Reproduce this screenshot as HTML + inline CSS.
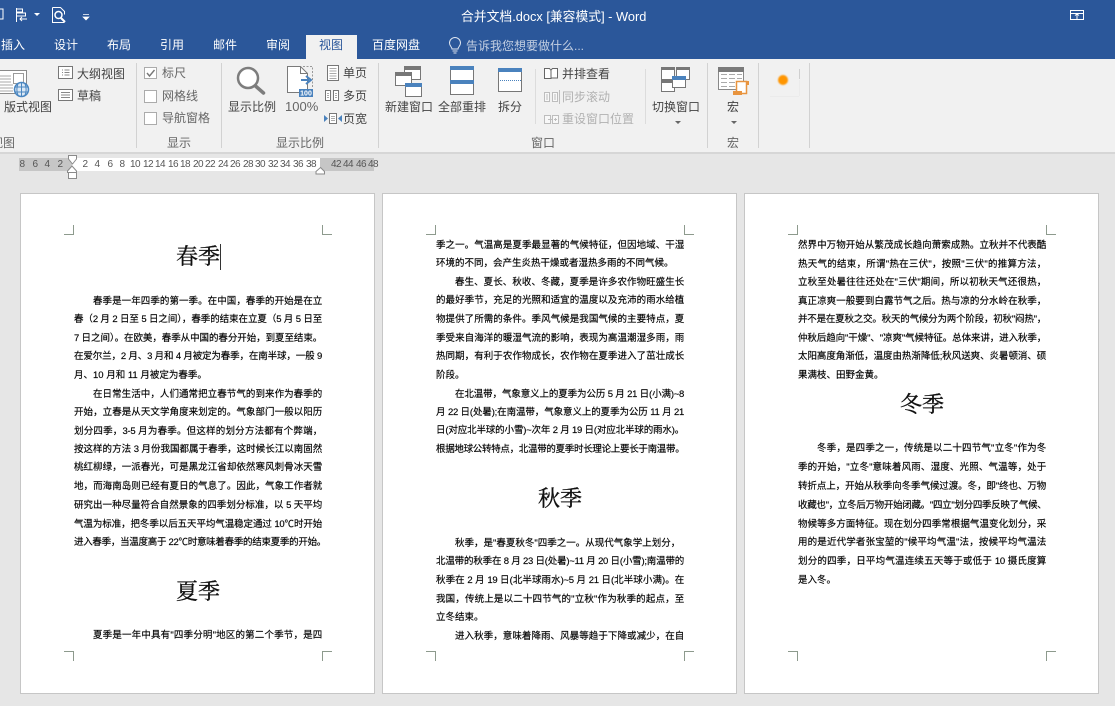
<!DOCTYPE html>
<html lang="zh"><head><meta charset="utf-8"><title>合并文档</title>
<style>
html,body{margin:0;padding:0}
body{width:1115px;height:706px;position:relative;overflow:hidden;background:#e6e6e6;font-family:"Liberation Sans","Noto Sans CJK SC",sans-serif}
#bar{position:absolute;left:0;top:0;width:1115px;height:59px;background:#2b579a}
#rib{position:absolute;left:0;top:59px;width:1115px;height:93px;background:#f1f1f1;border-bottom:2px solid #d6d6d6}
#atab{position:absolute;left:306px;top:35px;width:51px;height:24px;background:#f1f1f1}
svg{position:absolute;left:0;top:0}
.t{position:absolute;font-size:12px;line-height:16px;height:16px;color:#444;white-space:nowrap}
.w{color:#fff}.g{color:#b1b1b1}.h{color:#666}
.r{position:absolute;top:158px;height:13px;background:#c6c6c6}
.n{position:absolute;top:159px;font-size:10px;line-height:12px;color:#555;width:14px;text-align:center;letter-spacing:-.5px}
.p{position:absolute;top:193px;width:353px;height:499px;background:#fff;border:1px solid #c6c6c6}
.p i{position:absolute;display:block;width:9px;height:9px;border:0 solid #8d9a8d}
.a{left:43px;top:31px;border-right-width:1px!important;border-bottom-width:1px!important}
.b{left:301px;top:31px;border-left-width:1px!important;border-bottom-width:1px!important}
.c{left:43px;top:457px;border-right-width:1px!important;border-top-width:1px!important}
.d{left:301px;top:457px;border-left-width:1px!important;border-top-width:1px!important}
.l{position:absolute;left:53px;width:248px;height:14px;line-height:14px;font-size:9.5px;color:#000;white-space:nowrap;text-align:justify;text-align-last:justify;letter-spacing:-.3px;-webkit-text-stroke:.15px #000;font-family:"Liberation Sans","Noto Sans CJK SC",sans-serif}
.e{text-align-last:left;text-align:left;letter-spacing:0}
.x{padding-left:19px;width:229px}
.h1{position:absolute;left:1px;width:352px;text-align:center;font-size:22px;line-height:28px;color:#111;-webkit-text-stroke:.35px #111;font-family:"Liberation Serif","Noto Serif CJK SC",serif}
</style></head><body>
<div id="bar"></div><div id="rib"></div><div id="atab"></div>

<svg width="1115" height="152" viewBox="0 0 1115 152" fill="none">
<!-- QAT -->
<path d="M0 9h3v10H0" stroke="#fff"/>
<path d="M16.500 8v14M16.500 9h6v3h-6M16.500 13h9v3h-9M27 19h-7m2-2l-2 2 2 2" stroke="#fff"/>
<path d="M34 13h6l-3 3z" fill="#fff"/>
<path d="M52.500 7.500h8l4 4v3M52.500 7.500v15h12" stroke="#fff"/>
<circle cx="58.500" cy="15" r="3.500" stroke="#fff" stroke-width="1.500"/><path d="M61 18l4 4" stroke="#fff" stroke-width="2"/>
<path d="M83 14.500h6M83 17h6l-3 3z" stroke="#fff" fill="#fff" stroke-width=".7"/>
<path d="M1070.500 10.500h13v9h-13zM1070.500 13.500h13M1077 19v-5m-2 1.500l2-1.500 2 1.500" stroke="#fff"/>
<!-- bulb -->
<path d="M452 49c0-2-2.500-3-2.500-6a5.500 5.500 0 0 1 11 0c0 3-2.500 4-2.500 6zM452.500 51h5M453.500 53h3" stroke="#dfe6f0"/>
<!-- separators -->
<path d="M136.500 63v85M221.500 63v85M378.500 63v85M707.500 63v85M758.500 63v85M809.500 63v85" stroke="#d2d2d2"/>
<path d="M535.500 69v55M645.500 69v55" stroke="#dcdcdc"/>
<!-- layout view -->
<path d="M-1 70.500h27.500v23H-1z" fill="#fff" stroke="#8a8a8a"/>
<path d="M13.500 73.500h10v10h-10z" fill="#fff" stroke="#9a9a9a"/>
<path d="M0 76h11M0 79h11M0 82h11M0 85h13M0 88h13M0 91h13" stroke="#aaa"/>
<circle cx="21.500" cy="89.500" r="7" fill="#dbe8f5" stroke="#4a86c0" stroke-width="1.500"/>
<path d="M15 87h13M15 92h13M21.500 83v13M18 84c-1.500 3-1.500 8 0 11M25 84c1.500 3 1.500 8 0 11" stroke="#4a86c0"/>
<!-- outline / draft -->
<path d="M58.500 66.500h14v12h-14z" fill="#fff" stroke="#777"/>
<path d="M62 70h1M62 72.500h1M62 75h1M64.500 70h5M64.500 72.500h5M64.500 75h5" stroke="#888"/>
<path d="M58.500 89.500h14v11h-14z" fill="#fff" stroke="#777"/>
<path d="M61 92.500h9M61 95h9M61 97.500h9" stroke="#888"/>
<!-- checkboxes -->
<path d="M144.500 67.500h12v11h-12zM144.500 90.500h12v12h-12zM144.500 112.500h12v12h-12z" fill="#fff" stroke="#ababab"/>
<path d="M147 73l2.500 3 5-6" stroke="#777" stroke-width="1.400"/>
<!-- magnifier -->
<circle cx="248" cy="78" r="10" fill="#fff" stroke="#7d7d7d" stroke-width="2.500"/>
<path d="M255.500 86l8 7" stroke="#7d7d7d" stroke-width="3.500" stroke-linecap="round"/>
<!-- 100% -->
<path d="M287.500 66.500h13l7 7v19h-20z" fill="#fff" stroke="#7a7a7a"/>
<path d="M300.500 66.500v7h7" stroke="#7a7a7a"/>
<path d="M303 66.500h9.500v22" stroke="#999" stroke-dasharray="2 1.500"/>
<path d="M301 80h8m-3-4l5 4-5 4" stroke="#4a82bd" stroke-width="2"/>
<rect x="299" y="89" width="14" height="8" fill="#4a82bd"/>
<!-- single/multi/width -->
<path d="M327.500 65.500h11v15h-11z" fill="#fff" stroke="#777"/>
<path d="M329.500 68.500h7M329.500 71h7M329.500 73.500h7M329.500 76h7M329.500 78.500h7" stroke="#aaa"/>
<path d="M325.500 90.500h5v10h-5zM333.500 90.500h5v10h-5z" fill="#fff" stroke="#777"/>
<path d="M327 93.500h2M327 95.500h2M327 97.500h2M335 93.500h2M335 95.500h2M335 97.500h2" stroke="#aaa"/>
<path d="M329.500 113.500h7v10h-7z" fill="#fff" stroke="#777"/>
<path d="M331 116.500h4M331 118.500h4M331 120.500h4" stroke="#aaa"/>
<path d="M328 118.500l-4-3.500v7zM338 118.500l4-3.500v7z" fill="#4a82bd"/>
<!-- new window -->
<path d="M404.500 66.500h16v13h-16z" fill="#fff" stroke="#777"/><rect x="404" y="66" width="17" height="4" fill="#777"/>
<path d="M395.500 72.500h16v13h-16z" fill="#fff" stroke="#777"/><rect x="395" y="72" width="17" height="4" fill="#777"/>
<path d="M405.500 83.500h16v13h-16z" fill="#fff" stroke="#777"/><rect x="405" y="83" width="17" height="4" fill="#4a82bd"/>
<!-- arrange all -->
<path d="M450.500 66.500h23v28h-23z" fill="#fff" stroke="#777"/>
<rect x="450" y="66" width="24" height="4" fill="#4a82bd"/><rect x="450" y="80" width="24" height="4" fill="#4a82bd"/>
<!-- split -->
<path d="M498.500 68.500h23v23h-23z" fill="#fff" stroke="#777"/>
<rect x="498" y="68" width="24" height="4" fill="#4a82bd"/>
<path d="M500 80.500h21" stroke="#4a82bd" stroke-dasharray="1 1"/>
<!-- side by side -->
<path d="M544.500 68.500h5l1.500 2v8h-6.500zM552.500 68.500h5v9.500h-6.500v-8z" fill="#fff" stroke="#666"/>
<!-- sync scroll -->
<path d="M544.500 92.500h5v9h-5zM552.500 92.500h5v9h-5z" fill="#f8f8f8" stroke="#bdbdbd"/>
<path d="M546 95h2M546 97h2M546 99h2M554 95h2M554 97h2M554 99h2M559.500 90v14" stroke="#bdbdbd"/>
<!-- reset -->
<path d="M544.500 115.500h6v8h-6zM552.500 115.500h6v8h-6z" fill="#f8f8f8" stroke="#bdbdbd"/>
<path d="M548 119.500h4M554 119.500h3M555.500 118v3" stroke="#bdbdbd"/>
<!-- switch windows -->
<path d="M661.500 67.500h13v12h-13zM676.500 67.500h13v12h-13zM661.500 80.500h13v11h-13z" fill="#fff" stroke="#777"/>
<rect x="661" y="67" width="14" height="3" fill="#777"/><rect x="676" y="67" width="14" height="3" fill="#777"/><rect x="661" y="80" width="14" height="3" fill="#777"/>
<path d="M672.500 76.500h13v11h-13z" fill="#fff" stroke="#777"/><rect x="672" y="76" width="14" height="4" fill="#4a82bd"/>
<path d="M675 121h6l-3 3zM731 121h6l-3 3z" fill="#666"/>
<!-- macro -->
<path d="M718.500 67.500h25v22h-25z" fill="#fff" stroke="#888"/><rect x="718" y="67" width="26" height="5" fill="#7a7a7a"/>
<path d="M721 74.500h6M729 74.500h6M737 74.500h5M721 78.500h6M729 78.500h6M737 78.500h5M721 82.500h6M729 82.500h6M721 86.500h6M729 86.500h6" stroke="#aaa"/>
<path d="M736.500 81.500h10v12h-10z" fill="#fff" stroke="#e8943f" stroke-width="1.500"/>
<path d="M733 91h9v4h-9zM746 81h3v4h-3z" fill="#e8943f"/>
<!-- orange addin -->
<defs><filter id="bl" x="-40%" y="-40%" width="180%" height="180%"><feGaussianBlur stdDeviation=".7"/></filter></defs>
<circle cx="783" cy="80" r="5" fill="#ff9500" filter="url(#bl)"/>
<path d="M799.500 69v10" stroke="#cfcfcf"/><path d="M770 96.500h29M799.500 80v16" stroke="#ebebeb"/>
</svg>

<div class="t w" style="left:461px;top:9px;font-size:12.800px">合并文档.docx [兼容模式] - Word</div>
<div class="t w" style="left:1px;top:37px">插入</div>
<div class="t w" style="left:54px;top:37px">设计</div>
<div class="t w" style="left:107px;top:37px">布局</div>
<div class="t w" style="left:160px;top:37px">引用</div>
<div class="t w" style="left:213px;top:37px">邮件</div>
<div class="t w" style="left:266px;top:37px">审阅</div>
<div class="t" style="left:319px;top:37px;color:#2b579a">视图</div>
<div class="t w" style="left:372px;top:37px">百度网盘</div>
<div class="t" style="left:466px;top:38px;color:#c3cfe2">告诉我您想要做什么...</div>
<svg width="1115" height="100" style="top:0" viewBox="0 0 1115 100"><text x="306" y="95.500" font-size="7" font-weight="bold" fill="#fff" text-anchor="middle" font-family="Liberation Sans">100</text></svg>

<div class="t" style="left:4px;top:99px">版式视图</div>
<div class="t" style="left:77px;top:66px">大纲视图</div>
<div class="t" style="left:77px;top:88px">草稿</div>
<div class="t h" style="left:162px;top:65px">标尺</div>
<div class="t h" style="left:162px;top:88px">网格线</div>
<div class="t h" style="left:162px;top:110px">导航窗格</div>
<div class="t" style="left:228px;top:99px">显示比例</div>
<div class="t" style="left:285px;top:99px;font-size:13px;color:#666">100%</div>
<div class="t" style="left:343px;top:65px">单页</div>
<div class="t" style="left:343px;top:88px">多页</div>
<div class="t" style="left:343px;top:111px">页宽</div>
<div class="t" style="left:385px;top:99px">新建窗口</div>
<div class="t" style="left:438px;top:99px">全部重排</div>
<div class="t" style="left:498px;top:99px">拆分</div>
<div class="t" style="left:562px;top:66px">并排查看</div>
<div class="t g" style="left:562px;top:89px">同步滚动</div>
<div class="t g" style="left:562px;top:111px">重设窗口位置</div>
<div class="t" style="left:652px;top:99px">切换窗口</div>
<div class="t" style="left:727px;top:99px">宏</div>
<div class="t h" style="left:-9px;top:135px">视图</div>
<div class="t h" style="left:167px;top:135px">显示</div>
<div class="t h" style="left:276px;top:135px">显示比例</div>
<div class="t h" style="left:531px;top:135px">窗口</div>
<div class="t h" style="left:727px;top:135px">宏</div>

<!-- ruler -->
<div class="r" style="left:19px;width:53px"></div>
<div class="r" style="left:72px;width:248px;background:#fff"></div>
<div class="r" style="left:320px;width:54px"></div>
<div class="n" style="left:15px">8</div><div class="n" style="left:28px">6</div><div class="n" style="left:40px">4</div><div class="n" style="left:53px">2</div>
<div class="n" style="left:78px">2</div><div class="n" style="left:90px">4</div><div class="n" style="left:103px">6</div><div class="n" style="left:115px">8</div>
<div class="n" style="left:128px">10</div><div class="n" style="left:141px">12</div><div class="n" style="left:153px">14</div><div class="n" style="left:166px">16</div>
<div class="n" style="left:178px">18</div><div class="n" style="left:191px">20</div><div class="n" style="left:203px">22</div><div class="n" style="left:216px">24</div>
<div class="n" style="left:228px">26</div><div class="n" style="left:241px">28</div><div class="n" style="left:253px">30</div><div class="n" style="left:266px">32</div>
<div class="n" style="left:278px">34</div><div class="n" style="left:291px">36</div><div class="n" style="left:304px">38</div>
<div class="n" style="left:329px">42</div><div class="n" style="left:341px">44</div><div class="n" style="left:354px">46</div><div class="n" style="left:366px">48</div>
<svg width="1115" height="200" viewBox="0 0 1115 200" fill="none" style="top:0">
<path d="M68.500 155.500h8v3.500l-4 5-4-5zM72 166l4.500 5v1.500h-9V171zM68.500 172.500h8v6h-8z" fill="#fff" stroke="#8a8a8a"/>
<path d="M320.500 167.500l4 4v2.500h-8.500v-2.500z" fill="#fff" stroke="#8a8a8a"/>
</svg>

<!-- page 1 -->
<div class="p" style="left:20px"><i class="a"></i><i class="b"></i><i class="c"></i><i class="d"></i>
<div class="h1" style="top:49px">春季</div>
<div style="position:absolute;left:199px;top:50px;width:1px;height:26px;background:#333"></div>
<div class="l x" style="top:101px">春季是一年四季的第一季。在中国，春季的开始是在立</div>
<div class="l" style="top:119px">春（2 月 2 日至 5 日之间），春季的结束在立夏（5 月 5 日至</div>
<div class="l" style="top:138px">7 日之间）。在欧美，春季从中国的春分开始，到夏至结束。</div>
<div class="l" style="top:156px">在爱尔兰，2 月、3 月和 4 月被定为春季，在南半球，一般 9</div>
<div class="l e" style="top:175px">月、10 月和 11 月被定为春季。</div>
<div class="l x" style="top:194px">在日常生活中，人们通常把立春节气的到来作为春季的</div>
<div class="l" style="top:212px">开始，立春是从天文学角度来划定的。气象部门一般以阳历</div>
<div class="l" style="top:231px">划分四季，3-5 月为春季。但这样的划分方法都有个弊端，</div>
<div class="l" style="top:249px">按这样的方法 3 月份我国都属于春季，这时候长江以南固然</div>
<div class="l" style="top:267px">桃红柳绿，一派春光，可是黑龙江省却依然寒风刺骨冰天雪</div>
<div class="l" style="top:286px">地，而海南岛则已经有夏日的气息了。因此，气象工作者就</div>
<div class="l" style="top:305px">研究出一种尽量符合自然景象的四季划分标准，以 5 天平均</div>
<div class="l" style="top:324px">气温为标准，把冬季以后五天平均气温稳定通过 10℃时开始</div>
<div class="l" style="top:342px;width:252px">进入春季，当温度高于 22℃时意味着春季的结束夏季的开始。</div>
<div class="h1" style="top:384px">夏季</div>
<div class="l x" style="top:435px">夏季是一年中具有"四季分明"地区的第二个季节，是四</div>
</div>

<!-- page 2 -->
<div class="p" style="left:382px"><i class="a"></i><i class="b"></i><i class="c"></i><i class="d"></i>
<div class="l" style="top:45px">季之一。气温高是夏季最显著的气候特征，但因地域、干湿</div>
<div class="l e" style="top:63px">环境的不同，会产生炎热干燥或者湿热多雨的不同气候。</div>
<div class="l x" style="top:82px">春生、夏长、秋收、冬藏，夏季是许多农作物旺盛生长</div>
<div class="l" style="top:100px">的最好季节，充足的光照和适宜的温度以及充沛的雨水给植</div>
<div class="l" style="top:119px">物提供了所需的条件。季风气候是我国气候的主要特点，夏</div>
<div class="l" style="top:138px">季受来自海洋的暖湿气流的影响，表现为高温潮湿多雨，雨</div>
<div class="l" style="top:156px">热同期，有利于农作物成长，农作物在夏季进入了茁壮成长</div>
<div class="l e" style="top:175px">阶段。</div>
<div class="l x" style="top:194px">在北温带，气象意义上的夏季为公历 5 月 21 日(小满)~8</div>
<div class="l" style="top:212px">月 22 日(处暑);在南温带，气象意义上的夏季为公历 11 月 21</div>
<div class="l" style="top:230px">日(对应北半球的小雪)~次年 2 月 19 日(对应北半球的雨水)。</div>
<div class="l" style="top:249px">根据地球公转特点，北温带的夏季时长理论上要长于南温带。</div>
<div class="h1" style="top:291px">秋季</div>
<div class="l x" style="top:343px;text-align-last:left;letter-spacing:0">秋季，是"春夏秋冬"四季之一。从现代气象学上划分，</div>
<div class="l" style="top:361px">北温带的秋季在 8 月 23 日(处暑)~11 月 20 日(小雪);南温带的</div>
<div class="l" style="top:380px">秋季在 2 月 19 日(北半球雨水)~5 月 21 日(北半球小满)。在</div>
<div class="l" style="top:399px">我国，传统上是以二十四节气的"立秋"作为秋季的起点，至</div>
<div class="l e" style="top:417px">立冬结束。</div>
<div class="l x" style="top:436px">进入秋季，意味着降雨、风暴等趋于下降或减少，在自</div>
</div>

<!-- page 3 -->
<div class="p" style="left:744px"><i class="a"></i><i class="b"></i><i class="c"></i><i class="d"></i>
<div class="l" style="top:45px">然界中万物开始从繁茂成长趋向萧索成熟。立秋并不代表酷</div>
<div class="l" style="top:64px">热天气的结束，所谓"热在三伏"，按照"三伏"的推算方法，</div>
<div class="l" style="top:82px">立秋至处暑往往还处在"三伏"期间，所以初秋天气还很热，</div>
<div class="l" style="top:101px">真正凉爽一般要到白露节气之后。热与凉的分水岭在秋季，</div>
<div class="l" style="top:119px">并不是在夏秋之交。秋天的气候分为两个阶段，初秋"闷热"，</div>
<div class="l" style="top:138px">仲秋后趋向"干燥"、"凉爽"气候特征。总体来讲，进入秋季，</div>
<div class="l" style="top:156px">太阳高度角渐低，温度由热渐降低;秋风送爽、炎暑顿消、硕</div>
<div class="l e" style="top:175px">果满枝、田野金黄。</div>
<div class="h1" style="top:197px">冬季</div>
<div class="l x" style="top:248px">冬季，是四季之一，传统是以二十四节气"立冬"作为冬</div>
<div class="l" style="top:267px">季的开始，"立冬"意味着风雨、湿度、光照、气温等，处于</div>
<div class="l" style="top:286px">转折点上，开始从秋季向冬季气候过渡。冬，即"终也、万物</div>
<div class="l" style="top:305px">收藏也"，立冬后万物开始闭藏。"四立"划分四季反映了气候、</div>
<div class="l" style="top:324px">物候等多方面特征。现在划分四季常根据气温变化划分，采</div>
<div class="l" style="top:342px">用的是近代学者张宝堃的"候平均气温"法，按候平均气温法</div>
<div class="l" style="top:361px">划分的四季，日平均气温连续五天等于或低于 10 摄氏度算</div>
<div class="l e" style="top:380px">是入冬。</div>
</div>
</body></html>
